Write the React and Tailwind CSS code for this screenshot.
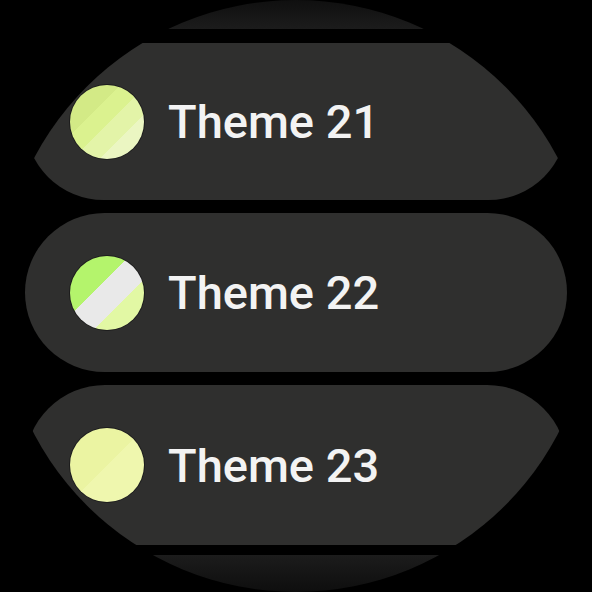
import React from "react";

const themes = [
  {
    name: "Theme 21",
    swatch: "bg-[linear-gradient(135deg,#d3ea86_0%,#d3ea86_34%,#dbf28f_34%,#dbf28f_52%,#e3f4a8_52%,#e3f4a8_70%,#ebf6c2_70%,#ebf6c2_100%)]",
    height: "h-[157px]",
  },
  {
    name: "Theme 22",
    swatch: "bg-[linear-gradient(135deg,#b4f46c_0%,#b4f46c_40%,#e9e9e9_40%,#e9e9e9_66%,#e2f8a4_66%,#e2f8a4_100%)]",
    height: "h-[159px]",
  },
  {
    name: "Theme 23",
    swatch: "bg-[linear-gradient(135deg,#ebf4a2_0%,#ebf4a2_50%,#eff7ae_50%,#eff7ae_100%)]",
    height: "h-[160px]",
  },
];

function ThemeChip({ theme }) {
  return (
    <div
      className={`mx-auto flex w-[542px] ${theme.height} shrink-0 items-center gap-[24px] rounded-full bg-[#2f2f2e] pl-[45px]`}
    >
      <span
        className={`h-[74px] w-[74px] shrink-0 rounded-full ring-1 ring-[#1c1c1c] ${theme.swatch}`}
      />
      <span className="text-[47px] font-medium leading-none text-[#f3f3f3] font-['Roboto',sans-serif]">
        {theme.name}
      </span>
    </div>
  );
}

export default function App() {
  return (
    <div className="h-[592px] w-[592px] bg-black">
      <div className="flex h-[592px] w-[592px] flex-col overflow-hidden rounded-full">
        {/* item scrolled off the top, faded out */}
        <div className="mx-auto mt-[-129px] h-[158px] w-[542px] shrink-0 rounded-full bg-[linear-gradient(to_bottom,#000_60%,#1c1c1c_100%)]" />
        <div className="mt-[14px] flex flex-col gap-[13px]">
          {themes.map((t) => (
            <ThemeChip key={t.name} theme={t} />
          ))}
        </div>
        {/* next item peeking in at the bottom */}
        <div className="mx-auto mt-[10px] h-[158px] w-[542px] shrink-0 rounded-full bg-[linear-gradient(to_bottom,#1c1c1c_0%,#0a0a0a_30%,#000_60%)]" />
      </div>
    </div>
  );
}
